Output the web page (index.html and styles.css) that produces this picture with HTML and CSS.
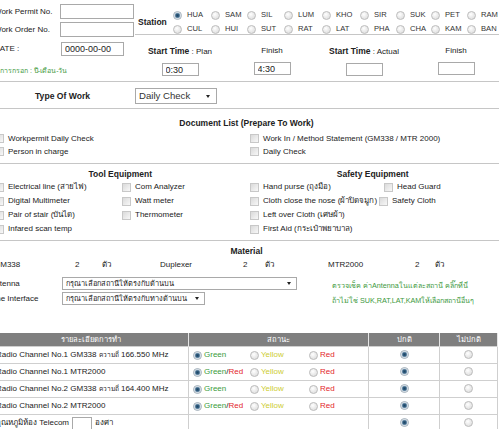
FILE: index.html
```html
<!DOCTYPE html>
<html>
<head>
<meta charset="utf-8">
<title>Daily Check</title>
<link rel="stylesheet" href="styles.css">
</head>
<body>
<div class="page">
  <div class="top">
    <div class="ids">
      <div class="id-row"><span class="id-lbl">Work Permit No.</span><input class="field f-id" type="text"></div>
      <div class="id-row"><span class="id-lbl">Work Order No.</span><input class="field f-id" type="text"></div>
    </div>
    <div class="station">
      <div class="st-lbl">Station</div>
      <div class="st-grid">
        <label class="opt"><input class="radio" type="radio" name="st" checked>HUA</label>
        <label class="opt"><input class="radio" type="radio" name="st">SAM</label>
        <label class="opt"><input class="radio" type="radio" name="st">SIL</label>
        <label class="opt"><input class="radio" type="radio" name="st">LUM</label>
        <label class="opt"><input class="radio" type="radio" name="st">KHO</label>
        <label class="opt"><input class="radio" type="radio" name="st">SIR</label>
        <label class="opt"><input class="radio" type="radio" name="st">SUK</label>
        <label class="opt"><input class="radio" type="radio" name="st">PET</label>
        <label class="opt"><input class="radio" type="radio" name="st">RAM</label>
        <label class="opt"><input class="radio" type="radio" name="st">CUL</label>
        <label class="opt"><input class="radio" type="radio" name="st">HUI</label>
        <label class="opt"><input class="radio" type="radio" name="st">SUT</label>
        <label class="opt"><input class="radio" type="radio" name="st">RAT</label>
        <label class="opt"><input class="radio" type="radio" name="st">LAT</label>
        <label class="opt"><input class="radio" type="radio" name="st">PHA</label>
        <label class="opt"><input class="radio" type="radio" name="st">CHA</label>
        <label class="opt"><input class="radio" type="radio" name="st">KAM</label>
        <label class="opt"><input class="radio" type="radio" name="st">BAN</label>
      </div>
    </div>
  </div>

  <div class="dates">
    <div class="date-l">
      <div class="date-row"><span class="date-lbl">DATE :</span><input class="field f-date" type="text" value="0000-00-00"></div>
      <div class="note">การกรอก : ปี-เดือน-วัน</div>
    </div>
    <div class="tcell"><div><b class="bold">Start Time</b> : Plan</div><input class="field f-time" type="text" value="0:30"></div>
    <div class="tcell"><div>Finish</div><input class="field f-time" type="text" value="4:30"></div>
    <div class="tcell"><div><b class="bold">Start Time</b> : Actual</div><input class="field f-time" type="text"></div>
    <div class="tcell"><div>Finish</div><input class="field f-time" type="text"></div>
  </div>

  <div class="type">
    <div class="type-lbl">Type Of Work</div>
    <div class="select s-type"><span>Daily Check</span><span class="arrow"></span></div>
  </div>

  <div class="docs">
    <div class="title">Document List (Prepare To Work)</div>
    <div class="doc-grid">
      <label class="ck"><input class="check" type="checkbox">Workpermit Daily Check</label>
      <label class="ck"><input class="check" type="checkbox">Work In / Method Statement (GM338 / MTR 2000)</label>
      <label class="ck"><input class="check" type="checkbox">Person in charge</label>
      <label class="ck"><input class="check" type="checkbox">Daily Check</label>
    </div>
  </div>

  <div class="equip">
    <div class="half">
      <div class="title">Tool Equipment</div>
      <div class="eq-grid tool-grid">
        <label class="ck"><input class="check" type="checkbox">Electrical line (สายไฟ)</label>
        <label class="ck"><input class="check" type="checkbox">Com Analyzer</label>
        <label class="ck"><input class="check" type="checkbox">Digital Multimeter</label>
        <label class="ck"><input class="check" type="checkbox">Watt meter</label>
        <label class="ck"><input class="check" type="checkbox">Pair of stair (บันได)</label>
        <label class="ck"><input class="check" type="checkbox">Thermometer</label>
        <label class="ck"><input class="check" type="checkbox">Infared scan temp</label>
        <span></span>
      </div>
    </div>
    <div class="half">
      <div class="title">Safety Equipment</div>
      <div class="eq-grid safe-grid">
        <label class="ck"><input class="check" type="checkbox">Hand purse (ถุงมือ)</label>
        <label class="ck ck-head"><input class="check" type="checkbox">Head Guard</label>
        <label class="ck"><input class="check" type="checkbox">Cloth close the nose (ผ้าปิดจมูก)</label>
        <label class="ck"><input class="check" type="checkbox">Safety Cloth</label>
        <label class="ck"><input class="check" type="checkbox">Left over Cloth (เศษผ้า)</label>
        <span></span>
        <label class="ck"><input class="check" type="checkbox">First Aid (กระเป๋าพยาบาล)</label>
        <span></span>
      </div>
    </div>
  </div>

  <div class="material">
    <div class="title">Material</div>
    <div class="mat-row">
      <span>GM338</span><span>2</span><span>ตัว</span>
      <span>Duplexer</span><span>2</span><span>ตัว</span>
      <span>MTR2000</span><span>2</span><span>ตัว</span>
    </div>
    <div class="ant">
      <div class="ant-l">
        <div class="ant-row"><span class="ant-lbl">Antenna</span><div class="select s-ant"><span>กรุณาเลือกสถานีให้ตรงกับด้านบน</span><span class="arrow"></span></div></div>
        <div class="ant-row"><span class="ant-lbl">Line Interface</span><div class="select s-if"><span>กรุณาเลือกสถานีให้ตรงกับทางด้านบน</span><span class="arrow"></span></div></div>
      </div>
      <div class="ant-r">
        <div>ตรวจเช็ค ค่าAntennaในแต่ละสถานี คลิ๊กที่นี่</div>
        <div>ถ้าไม่ใช่ SUK,RAT,LAT,KAMให้เลือกสถานีอื่นๆ</div>
      </div>
    </div>

    <table class="checks">
      <colgroup><col class="c1"><col class="c2"><col class="c3"><col class="c4"></colgroup>
      <tr class="head"><th>รายละเอียดการทำ</th><th>สถานะ</th><th>ปกติ</th><th>ไม่ปกติ</th></tr>
      <tr class="row">
        <td class="desc">Radio Channel No.1 GM338 <span class="th-sm">ความถี่</span> 166.550 MHz</td>
        <td><div class="status"><label class="sopt"><input class="radio" type="radio" name="s1" checked><span class="g">Green</span></label><label class="sopt"><input class="radio" type="radio" name="s1"><span class="y">Yellow</span></label><label class="sopt"><input class="radio" type="radio" name="s1"><span class="r">Red</span></label></div></td>
        <td class="ctr"><input class="radio" type="radio" name="n1" checked></td>
        <td class="ctr"><input class="radio" type="radio" name="n1"></td>
      </tr>
      <tr class="row">
        <td class="desc">Radio Channel No.1 MTR2000</td>
        <td><div class="status"><label class="sopt"><input class="radio" type="radio" name="s2" checked><span><span class="g">Green</span>/<span class="r">Red</span></span></label><label class="sopt"><input class="radio" type="radio" name="s2"><span class="y">Yellow</span></label><label class="sopt"><input class="radio" type="radio" name="s2"><span class="r">Red</span></label></div></td>
        <td class="ctr"><input class="radio" type="radio" name="n2" checked></td>
        <td class="ctr"><input class="radio" type="radio" name="n2"></td>
      </tr>
      <tr class="row">
        <td class="desc">Radio Channel No.2 GM338 <span class="th-sm">ความถี่</span> 164.400 MHz</td>
        <td><div class="status"><label class="sopt"><input class="radio" type="radio" name="s3" checked><span class="g">Green</span></label><label class="sopt"><input class="radio" type="radio" name="s3"><span class="y">Yellow</span></label><label class="sopt"><input class="radio" type="radio" name="s3"><span class="r">Red</span></label></div></td>
        <td class="ctr"><input class="radio" type="radio" name="n3" checked></td>
        <td class="ctr"><input class="radio" type="radio" name="n3"></td>
      </tr>
      <tr class="row">
        <td class="desc">Radio Channel No.2 MTR2000</td>
        <td><div class="status"><label class="sopt"><input class="radio" type="radio" name="s4" checked><span><span class="g">Green</span>/<span class="r">Red</span></span></label><label class="sopt"><input class="radio" type="radio" name="s4"><span class="y">Yellow</span></label><label class="sopt"><input class="radio" type="radio" name="s4"><span class="r">Red</span></label></div></td>
        <td class="ctr"><input class="radio" type="radio" name="n4" checked></td>
        <td class="ctr"><input class="radio" type="radio" name="n4"></td>
      </tr>
      <tr class="row">
        <td class="desc"><div class="temp"><span>อุณหภูมิห้อง Telecom</span><input class="field f-temp" type="text"><span>องศา</span></div></td>
        <td></td>
        <td class="ctr"><input class="radio" type="radio" name="n5" checked></td>
        <td class="ctr"><input class="radio" type="radio" name="n5"></td>
      </tr>
    </table>
  </div>
</div>
</body>
</html>
```

FILE: styles.css
```css
html, body {
  margin: 0;
  padding: 0;
  background: #ffffff;
  overflow: hidden;
}

.page {
  margin-left: -6px;
  width: 505px;
  font-family: "Liberation Sans", Arial, "Noto Sans", "DejaVu Sans", sans-serif;
  font-size: 8px;
  line-height: 12px;
  color: #222222;
}

/* generic controls */
.field {
  display: block;
  margin: 0;
  padding: 0 3px;
  box-sizing: border-box;
  border: 1px solid #a9a9a9;
  background: #ffffff;
  font-family: "Liberation Sans", Arial, sans-serif;
  font-size: 9px;
  color: #222;
  outline: none;
}

.radio {
  -webkit-appearance: none;
  appearance: none;
  flex: none;
  margin: 0;
  width: 9px;
  height: 9px;
  box-sizing: border-box;
  border: 1px solid #bdbdbd;
  border-radius: 50%;
  background: radial-gradient(circle at 40% 35%, #ffffff 0, #ececec 45%, #d9d9d9 100%);
  vertical-align: middle;
}

.radio:checked {
  border-color: #a7b3bd;
  background: radial-gradient(circle at 50% 50%, #1f4563 0, #2f5b7d 1.4px, #7d9bb4 2.4px, #e9eef2 3.2px, #d5dbe0 100%);
}

.check {
  -webkit-appearance: none;
  appearance: none;
  flex: none;
  margin: 0;
  width: 9px;
  height: 9px;
  box-sizing: border-box;
  border: 1px solid #c8c8c8;
  background: linear-gradient(135deg, #dadada 0%, #ececec 60%, #f8f8f8 100%);
}

.select {
  display: flex;
  align-items: center;
  justify-content: space-between;
  box-sizing: border-box;
  border: 1px solid #a9a9a9;
  background: #ffffff;
  padding: 0 5px 0 3px;
  white-space: nowrap;
  overflow: hidden;
}

.arrow {
  flex: none;
  width: 0;
  height: 0;
  border-left: 2.5px solid transparent;
  border-right: 2.5px solid transparent;
  border-top: 3px solid #222;
}

.bold {
  font-weight: bold;
  font-size: 8.5px;
}

.title {
  text-align: center;
  font-weight: bold;
  font-size: 8.5px;
  line-height: 12px;
}

.opt {
  display: flex;
  align-items: center;
  gap: 5px;
}

.ck {
  display: flex;
  align-items: center;
  gap: 4px;
  white-space: nowrap;
}

/* top block */
.top {
  display: flex;
  height: 35px;
}

.ids {
  width: 141px;
  flex: none;
  padding-top: 4px;
  box-sizing: border-box;
  display: flex;
  flex-direction: column;
  gap: 3px;
}

.id-row {
  display: flex;
  align-items: center;
  height: 15px;
}

.id-lbl {
  width: 66px;
  flex: none;
  white-space: nowrap;
}

.f-id {
  width: 74px;
  height: 15px;
}

.station {
  flex: 1;
  display: flex;
  align-items: flex-start;
  height: 26px;
  padding-top: 8px;
  border-bottom: 1px solid #c6c6c6;
}

.st-lbl {
  width: 29px;
  padding-left: 3px;
  font-weight: bold;
  font-size: 8.5px;
  line-height: 28px;
}

.st-grid {
  margin-left: 6px;
  display: grid;
  grid-template-columns: 38px 36px 37px 38px 38px 36px 35px 36px auto;
  grid-auto-rows: 14px;
  font-size: 7.6px;
  color: #333;
}

/* dates */
.dates {
  display: flex;
  height: 46px;
  border-bottom: 1px solid #c6c6c6;
}

.date-l {
  width: 140px;
  flex: none;
  padding-top: 7px;
  box-sizing: border-box;
}

.date-row {
  display: flex;
  align-items: center;
  height: 14px;
}

.date-lbl {
  width: 67px;
  flex: none;
}

.f-date {
  width: 63px;
  height: 14px;
}

.note {
  margin-top: 9px;
  padding-left: 6px;
  color: #3d993d;
  font-size: 7px;
  white-space: nowrap;
}

.tcell {
  width: 92px;
  flex: none;
  padding-top: 10px;
  box-sizing: border-box;
  text-align: center;
  white-space: nowrap;
}

.f-time {
  margin: 5px auto 0;
  width: 37px;
  height: 13px;
  text-align: left;
}

/* type of work */
.type {
  display: flex;
  align-items: center;
  height: 27px;
  padding-top: 2px;
  box-sizing: border-box;
  border-bottom: 1px solid #c6c6c6;
}

.type-lbl {
  width: 141px;
  flex: none;
  padding-left: 41px;
  box-sizing: border-box;
  font-weight: bold;
  font-size: 8.6px;
}

.s-type {
  width: 82px;
  height: 16px;
  font-size: 9.6px;
  color: #333;
  padding-right: 6px;
}

/* documents */
.docs {
  padding: 8px 0 5px;
  border-bottom: 1px solid #c6c6c6;
}

.doc-grid {
  margin-top: 3px;
  padding-left: 1px;
  display: grid;
  grid-template-columns: 255px auto;
  grid-auto-rows: 13px;
}

/* equipment */
.equip {
  display: flex;
  padding: 4px 0;
  border-bottom: 1px solid #c6c6c6;
}

.half {
  width: 50%;
}

.eq-grid {
  display: grid;
  grid-auto-rows: 14px;
}

.tool-grid {
  grid-template-columns: 127px auto;
  padding-left: 1px;
}

.safe-grid {
  grid-template-columns: 129px auto;
  padding-left: 3.5px;
}

.ck-head {
  margin-left: 5px;
}

/* material */
.material {
  padding-top: 4px;
}

.mat-row {
  margin-top: 2px;
  display: grid;
  grid-template-columns: 81px 27px 58px 83px 22px 63px 87px 20px auto;
}

.ant {
  margin-top: 5px;
  display: flex;
}

.ant-l {
  width: 338px;
  flex: none;
}

.ant-row {
  display: flex;
  align-items: center;
  height: 15px;
}

.ant-lbl {
  width: 68px;
  flex: none;
  text-indent: -4px;
  white-space: nowrap;
}

.s-ant {
  width: 235px;
  height: 13px;
  font-size: 7.4px;
}

.s-if {
  width: 143px;
  height: 13px;
  font-size: 7.4px;
}

.ant-r {
  padding-top: 2px;
  line-height: 15px;
  color: #3d993d;
  font-size: 7.2px;
  white-space: nowrap;
}

/* check table */
.checks {
  margin: 25px 0 0 -1px;
  width: 504px;
  border-collapse: collapse;
  table-layout: fixed;
}

.c1 { width: 195px; }
.c2 { width: 180px; }
.c3 { width: 71px; }
.c4 { width: 58px; }

.checks th {
  height: 13px;
  padding: 0;
  background: #7f7f7f;
  color: #ffffff;
  font-weight: normal;
  font-size: 7.6px;
  line-height: 12px;
  border-left: 1px solid #e6e6e6;
  border-right: 1px solid #e6e6e6;
}

.checks td {
  height: 16px;
  padding: 0;
  border: 1px solid #cfcfcf;
  white-space: nowrap;
  overflow: hidden;
}

.desc {
  padding-left: 2px !important;
}

.th-sm {
  font-size: 6.6px;
}

.ctr {
  text-align: center;
}

.ctr .radio {
  vertical-align: middle;
}

.status {
  padding-left: 4px;
  display: grid;
  grid-template-columns: 57px 59px auto;
}

.sopt {
  display: flex;
  align-items: center;
  gap: 2px;
}

.g { color: #3c9b3c; }
.y { color: #cdcd33; }
.r { color: #e3262b; }

.temp {
  display: flex;
  align-items: center;
  gap: 3px;
}

.f-temp {
  width: 20px;
  height: 13px;
}
```
